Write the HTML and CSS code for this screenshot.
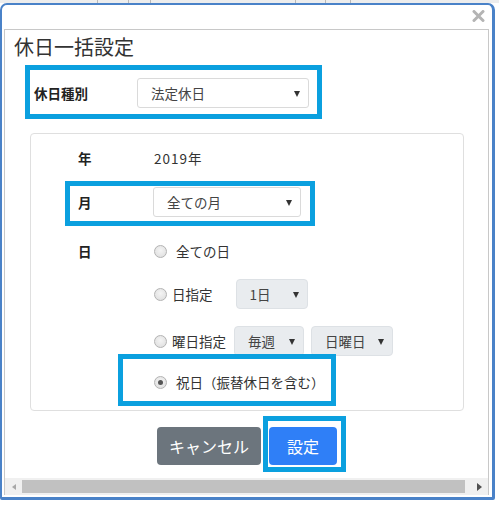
FILE: index.html
```html
<!DOCTYPE html>
<html lang="ja">
<head>
<meta charset="utf-8">
<link rel="stylesheet" href="styles.css">
</head>
<body>
<div class="strip"><span class="sa"></span><span class="sb"></span><span class="sc"></span><span class="sd"></span><span class="se"></span><span class="sf"></span></div>
<div class="window">
  <div class="win-head">
    <svg class="close" viewBox="0 0 13 12" width="13" height="12"><path d="M2 1.5 L11 10.5 M11 1.5 L2 10.5" stroke="#b4b4b4" stroke-width="3" stroke-linecap="round"/></svg>
  </div>
  <div class="pane">
    <div class="content">
      <h1 class="title">休日一括設定</h1>
      <div class="hl hl-type">
        <div class="type-label">休日種別</div>
        <div class="select sel-type"><span>法定休日</span><i class="caret"></i></div>
      </div>
      <div class="card">
        <div class="row row-year">
          <div class="lbl">年</div>
          <div class="val"><span class="num">2019</span>年</div>
        </div>
        <div class="hl hl-month">
          <div class="lbl">月</div>
          <div class="select sel-month"><span>全ての月</span><i class="caret"></i></div>
        </div>
        <div class="row row-day">
          <div class="lbl">日</div>
          <div class="opts">
            <div class="opt opt1"><span class="radio"></span><span class="otext">全ての日</span></div>
            <div class="opt opt2"><span class="radio"></span><span class="otext tight">日指定</span><div class="select grey sel-d"><span>1日</span><i class="caret"></i></div></div>
            <div class="opt opt3"><span class="radio"></span><span class="otext tight">曜日指定</span><div class="select grey sel-w"><span>毎週</span><i class="caret"></i></div><div class="select grey sel-wd"><span>日曜日</span><i class="caret"></i></div></div>
            <div class="hl hl-holiday">
              <div class="opt"><span class="radio checked"></span><span class="otext">祝日（振替休日を含む）</span></div>
            </div>
          </div>
        </div>
      </div>
      <div class="actions">
        <button class="btn btn-cancel">キャンセル</button>
        <div class="hl hl-submit"><button class="btn btn-primary">設定</button></div>
      </div>
    </div>
    <div class="hscroll">
      <div class="sb-btn"><i class="arr-left"></i></div>
      <div class="thumb"></div>
      <div class="track-gap"></div>
      <div class="sb-btn"><i class="arr-right"></i></div>
    </div>
  </div>
</div>
</body>
</html>
```
FILE: styles.css
```css
* { box-sizing: border-box; }
html, body { margin: 0; padding: 0; background: #fff; }
body {
  font-family: "Noto Sans CJK JP", "Noto Sans", sans-serif;
  color: #333;
  width: 499px;
  height: 505px;
  overflow: hidden;
}
.strip { display: flex; height: 3px; background: #ededed; }
.strip span { flex: none; height: 3px; border-right: 1px solid #b9b9b9; }
.sa { width: 98px; } .sb { width: 31px; } .sc { width: 22px; }
.sd { width: 145px; } .se { width: 30px; } .sf { width: 25px; }

.window {
  width: 495px;
  height: 497px;
  border: 2px solid #4a82c8;
  border-right-width: 3px;
  border-bottom-width: 3px;
  border-radius: 7px 7px 2px 2px;
  background: #fff;
  display: flex;
  flex-direction: column;
}
.win-head {
  flex: none;
  height: 24px;
  display: flex;
  justify-content: flex-end;
  align-items: flex-start;
  padding: 5px 7px 0 0;
}
.close { display: block; }
.pane {
  flex: none;
  margin-left: 2px;
  width: 485px;
  height: 466px;
  border: 1px solid #c8c8c8;
  border-bottom: 0;
  display: flex;
  flex-direction: column;
}
.content { flex: none; height: 448px; overflow: hidden; }

.title {
  margin: 0;
  padding: 4px 0 0 9px;
  font-size: 20px;
  line-height: 26px;
  font-weight: normal;
  color: #333;
}
.hl { border: 5px solid #0ba0df; }
.hl-type {
  margin: 5px 0 0 20px;
  width: 297px;
  height: 54px;
  display: flex;
  align-items: center;
  padding: 2px 0 0 4px;
}
.type-label { width: 103px; font-size: 13.5px; font-weight: bold; color: #222; line-height: 20px; }

.select {
  flex: none;
  height: 30px;
  display: flex;
  align-items: center;
  justify-content: space-between;
  padding: 0 8px 0 13px;
  background: #fff;
  border: 1px solid #dadada;
  border-radius: 3px;
  font-size: 13.5px;
  line-height: 20px;
  color: #444;
}
.caret {
  display: block;
  width: 0; height: 0;
  border-left: 3.5px solid transparent;
  border-right: 3.5px solid transparent;
  border-top: 6px solid #333;
  margin-top: 2px;
}
.sel-type { width: 172px; }
.sel-month { width: 148px; }
.select.grey { background: #e9ecef; border-color: #dde1e5; border-radius: 4px; padding-left: 13px; padding-right: 8px; }
.sel-d { width: 72px; margin-left: 23px; }
.sel-w { width: 70px; margin-left: 8px; }
.sel-wd { width: 82px; margin-left: 7px; }

.card {
  margin: 14px 0 0 25px;
  width: 434px;
  border: 1px solid #dfdfdf;
  border-radius: 4px;
  padding: 0 0 4px 0;
}
.row { display: flex; padding-left: 47px; }
.lbl { width: 75px; flex: none; font-size: 13.5px; font-weight: bold; color: #222; line-height: 30px; }
.val { font-size: 13.5px; line-height: 30px; color: #333; padding-left: 1px; }
.num { letter-spacing: 1px; }
.row-year { margin-top: 9px; height: 30px; }
.hl-month {
  margin: 8px 0 0 34px;
  width: 250px;
  height: 45px;
  display: flex;
  align-items: flex-start;
  padding: 1px 0 4px 8px;
}
.row-day { margin-top: 10px; }
.opts { display: flex; flex-direction: column; }
.opt { display: flex; align-items: center; height: 30px; }
.opt2 { margin-top: 13px; }
.opt3 { margin-top: 17px; }
.radio {
  flex: none;
  width: 13px; height: 13px;
  margin-left: 1px;
  border-radius: 50%;
  border: 1px solid #b3b3b3;
  background: radial-gradient(circle at 50% 40%, #f4f4f4 0, #dcdcdc 100%);
  display: flex;
  align-items: center;
  justify-content: center;
}
.radio.checked::after {
  content: "";
  width: 5px; height: 5px;
  border-radius: 50%;
  background: #555;
}
.otext { margin-left: 9px; font-size: 13.5px; line-height: 20px; color: #333; white-space: nowrap; }
.otext.tight { margin-left: 5px; }
.hl-holiday {
  margin: -2px 0 0 -35px;
  width: 218px;
  height: 52px;
  padding: 8px 0 4px 30px;
}

.actions { display: flex; align-items: flex-start; margin-top: 5px; padding-left: 152px; }
.btn {
  border: 0;
  height: 38px;
  border-radius: 4px;
  color: #fff;
  font-family: "Noto Sans CJK JP", "Noto Sans", sans-serif;
  font-size: 16px;
  line-height: 38px;
  padding: 0;
  display: block;
}
.btn-cancel { width: 104px; margin-top: 11px; background: #6c757d; }
.hl-submit { margin-left: 2px; padding: 6px 4px 2px 1px; }
.btn-primary { width: 68px; background: #2f7ff7; }

.hscroll { flex: none; height: 17px; display: flex; background: #f0f0f0; }
.sb-btn { flex: none; width: 17px; height: 17px; display: flex; align-items: center; justify-content: center; }
.thumb { flex: none; width: 443px; height: 13px; margin-top: 2px; background: #c1c1c1; }
.track-gap { flex: none; width: 6px; }
.arr-left {
  display: block; width: 0; height: 0;
  border-top: 3.5px solid transparent;
  border-bottom: 3.5px solid transparent;
  border-right: 4px solid #a8a8a8;
}
.arr-right {
  display: block; width: 0; height: 0;
  border-top: 4px solid transparent;
  border-bottom: 4px solid transparent;
  border-left: 5px solid #505050;
}
```
